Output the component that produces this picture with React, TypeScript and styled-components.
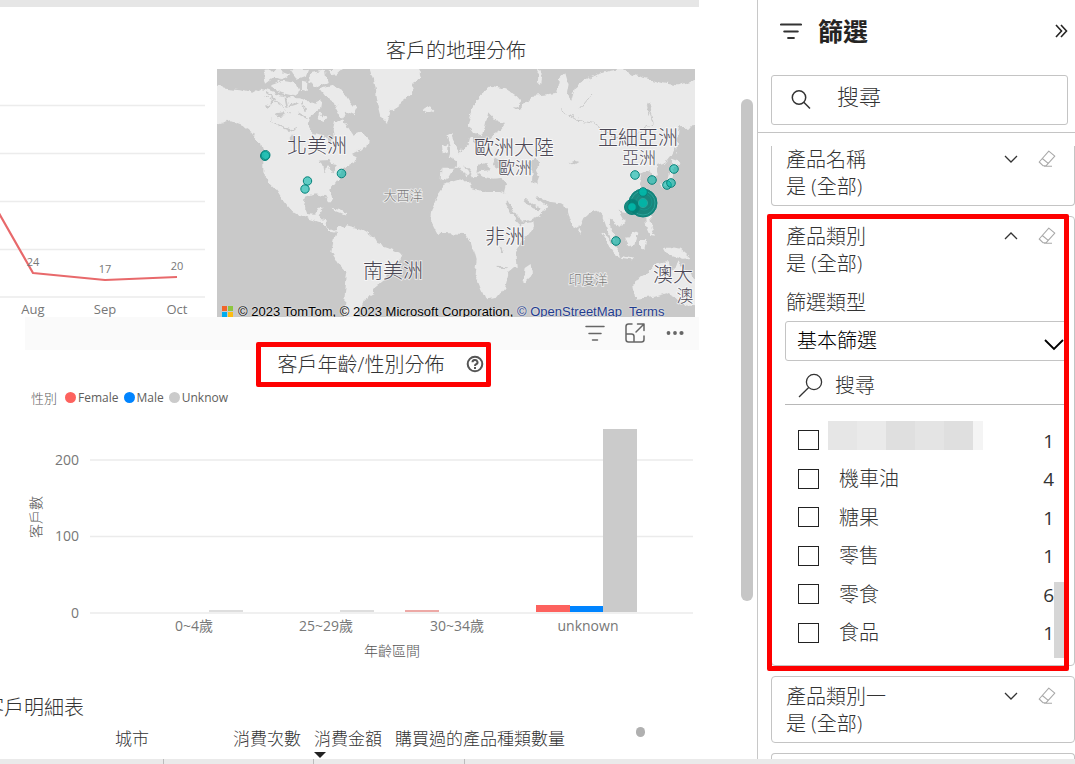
import React from "react";
import styled, { createGlobalStyle } from "styled-components";

const GlobalStyle = createGlobalStyle`
  * { box-sizing: border-box; }
  body {
    margin: 0;
    background: #fff;
    color: #333;
    font-family: "Open Sans", "Noto Sans CJK TC", sans-serif;
    font-weight: 300;
  }
  button, input, select { font: inherit; color: inherit; }
  h1, h2, h3, p, ul { margin: 0; padding: 0; font-weight: inherit; }
`;

const Page = styled.div`
  display: flex;
  flex-direction: column;
  min-height: 100vh;
  overflow: hidden;
`;

const Workspace = styled.div`
  display: flex;
  flex: 1;
`;

/* ---------- report ---------- */

const Report = styled.main`
  flex: 1;
  min-width: 0;
  display: flex;
`;

const Canvas = styled.div`
  flex: 1;
  min-width: 0;
  display: flex;
  flex-direction: column;
  overflow: hidden;
`;

const TopStrip = styled.div`
  height: 7px;
  margin-right: 1px;
  background: #e6e6e6;
`;

const ScrollTrack = styled.div`
  width: 57px;
  padding: 99px 4px 0 0;
  display: flex;
  justify-content: flex-end;
`;

const ScrollThumb = styled.div`
  width: 12px;
  height: 502px;
  border-radius: 6px;
  background: #c6c6c6;
`;

const VisualRow = styled.div`
  display: flex;
  height: 310px;
  padding-right: 5px;
`;

const Trend = styled.svg`
  width: 205px;
  height: 310px;
  flex: none;
  overflow: visible;
`;

const MapVisual = styled.section`
  flex: 1;
  min-width: 0;
  margin-left: 12px;
  display: flex;
  flex-direction: column;
`;

const VisualTitle = styled.h2`
  font-size: 20px;
  line-height: 30px;
  text-align: center;
`;

const MapTitle = styled(VisualTitle)`
  padding: 29px 0 3px;
`;

const MapFrame = styled.div`
  position: relative;
  flex: 1;
  min-height: 0;
  overflow: hidden;
  background: #c9c9c9;
`;

const MapSvg = styled.svg`
  display: block;
  width: 100%;
  height: 100%;
`;

const MapLabel = styled.text<{ $size: number; $soft?: boolean }>`
  font-size: ${(p) => p.$size}px;
  fill: ${(p) => (p.$soft ? "#777" : "#4b4754")};
  stroke: rgba(255, 255, 255, 0.6);
  stroke-width: 2px;
  paint-order: stroke;
  text-anchor: middle;
  dominant-baseline: central;
`;

const Attribution = styled.div`
  position: absolute;
  left: 5px;
  bottom: -2px;
  display: flex;
  align-items: center;
  gap: 5px;
  white-space: pre;
  font: 400 13px/15px "Liberation Sans", sans-serif;
  color: #000;
  text-shadow: 0 0 2px #fff;
  a { color: #1f3c8f; text-decoration: none; }
`;

const VisualToolbar = styled.div`
  display: flex;
  align-items: center;
  justify-content: flex-end;
  gap: 16px;
  height: 33px;
  margin: 0 1px 0 25px;
  padding: 0 12px 2px 0;
  background: #fafafa;
`;

const IconButton = styled.button`
  display: flex;
  align-items: center;
  justify-content: center;
  width: 24px;
  height: 24px;
  padding: 0;
  border: 0;
  background: none;
  color: #666;
`;

const Heading = styled.div`
  display: flex;
  justify-content: center;
  height: 30px;
  margin-left: 62px;
`;

const TitleCallout = styled.div`
  position: absolute;
  inset: -8px -7px -7px -22px;
  border: 5px solid #fe0000;
  border-radius: 2px;
  pointer-events: none;
`;

const CalloutAnchor = styled.div`
  position: relative;
  display: flex;
  align-items: center;
  gap: 22px;
  > svg { margin-bottom: 2px; }
`;

const Legend = styled.ul`
  display: flex;
  align-items: center;
  gap: 5px;
  height: 24px;
  margin: 5px 0 0 31px;
  list-style: none;
  font-size: 12px;
  color: #605e5c;
  font-weight: 400;
`;

const LegendTitle = styled.li`
  margin-right: 3px;
  font-size: 13px;
  font-weight: 300;
`;

const LegendItem = styled.li<{ $color: string }>`
  display: flex;
  align-items: center;
  gap: 2px;
  &::before {
    content: "";
    width: 11px;
    height: 11px;
    border-radius: 50%;
    background: ${(p) => p.$color};
  }
`;

const ColumnChart = styled.svg`
  display: block;
  width: 100%;
  height: 260px;
`;

const AxisText = styled.text<{ $size?: number; $anchor?: string }>`
  font-size: ${(p) => p.$size ?? 13}px;
  font-weight: 400;
  fill: #777;
  text-anchor: ${(p) => p.$anchor ?? "middle"};
  dominant-baseline: central;
`;

const AxisTitle = styled(AxisText)`
  font-weight: 300;
  fill: #555;
`;

const DetailTitle = styled.h2`
  margin: 24px 0 0 -16px;
  font-size: 20px;
  line-height: 30px;
  white-space: nowrap;
`;

const DetailHead = styled.div`
  display: flex;
  align-items: flex-start;
  height: 36px;
`;

const DetailTable = styled.table`
  margin-left: 56px;
  border-collapse: collapse;
  font-size: 17px;
  line-height: 24px;
  th { padding: 4px 0 0 13px; font-weight: 300; text-align: right; white-space: nowrap; }
  th:first-child { width: 93px; }
  th:nth-child(2) { width: 152px; }
`;

const Sorted = styled.div`
  position: relative;
  &::after {
    content: "";
    position: absolute;
    left: 0;
    top: 25px;
    border: 6px solid transparent;
    border-top-color: #222;
    border-bottom: 0;
  }
`;

const ResizeDot = styled.div`
  width: 9px;
  height: 10px;
  margin: 4px 0 0 71px;
  border-radius: 5px;
  background: #b0b0b0;
`;

const BottomStrip = styled.footer`
  display: flex;
  height: 5px;
  background: #eaeaea;
`;

const StripCell = styled.div<{ $width: number }>`
  width: ${(p) => p.$width}px;
  border-right: 1px solid #bcbcbc;
`;

/* ---------- filter panel ---------- */

const Panel = styled.aside`
  width: 318px;
  flex: none;
  display: flex;
  flex-direction: column;
  border-left: 1px solid #c8c8c8;
`;

const PanelHeader = styled.header`
  display: flex;
  align-items: center;
  height: 75px;
  padding: 0 2px 14px 22px;
  h1 { flex: 1; margin-left: 16px; font-size: 25px; line-height: 34px; font-weight: 700; color: #252423; }
  button { color: #252423; }
`;

const PanelSearch = styled.label`
  display: flex;
  align-items: center;
  gap: 26px;
  height: 50px;
  margin: 0 7px 7px 13px;
  padding: 0 19px;
  border: 1px solid #c4c4c4;
  border-radius: 3px;
  input {
    flex: 1;
    min-width: 0;
    padding: 0 0 8px;
    border: 0;
    outline: 0;
    background: none;
    font-size: 22px;
    line-height: 30px;
  }
  input::placeholder { color: #333; opacity: 1; }
`;

const CardList = styled.div`
  flex: 1;
  display: flex;
  flex-direction: column;
  gap: 10px;
  padding: 13px 0 0 13px;
  border-top: 1px solid #c4c4c4;
`;

const Card = styled.section<{ $part?: "top" | "bottom" }>`
  position: relative;
  padding: ${(p) => (p.$part === "bottom" ? "0 14px 5px" : "6px 14px 5px")};
  border: 1px solid #c4c4c4;
  border-radius: 4px;
  font-size: 20px;
  line-height: 27px;
  ${(p) => p.$part === "bottom" && "border-top: 0; border-top-left-radius: 0; border-top-right-radius: 0;"}
  ${(p) => p.$part === "top" && "border-bottom: 0; border-bottom-left-radius: 0; border-bottom-right-radius: 0; padding: 0; height: 6px;"}
`;

const CardHead = styled.div`
  display: flex;
  align-items: center;
  height: 27px;
  h3 { flex: 1; font-size: 20px; }
  button { margin: 0 1px 2px 0; }
  button + button { margin-left: 11px; color: #a9a9a9; }
`;

const CardBody = styled.div`
  position: relative;
  display: flex;
  flex-direction: column;
  height: 383px;
  margin: 0 -4px 0 -1px;
  padding-top: 12px;
  overflow: hidden;
  > label:first-child { margin-left: 1px; }
`;

const SelectBox = styled.div`
  position: relative;
  margin: 5px -12px 0 0;
  select {
    display: block;
    appearance: none;
    width: 100%;
    height: 40px;
    padding: 0 40px 2px 11px;
    border: 1px solid #c4c4c4;
    border-radius: 3px;
    background: #fff;
    color: #000;
  }
  svg { position: absolute; right: 12px; top: 18px; pointer-events: none; }
`;

const ValueSearch = styled.label`
  display: flex;
  align-items: center;
  gap: 12px;
  height: 44px;
  padding: 6px 0 0 13px;
  border-bottom: 1px solid #b8b8b8;
  svg { flex: none; }
  input { flex: 1; min-width: 0; padding: 0; border: 0; outline: 0; background: none; line-height: 27px; }
  input::placeholder { color: #333; opacity: 1; }
`;

const Values = styled.ul`
  display: grid;
  grid-auto-rows: 1fr;
  height: 231px;
  margin-top: 16px;
  padding: 0 10px 0 13px;
  list-style: none;
`;

const Value = styled.li`
  display: flex;
  align-items: center;
  justify-content: space-between;
  label { display: flex; align-items: center; gap: 20px; height: 100%; }
  input {
    appearance: none;
    width: 21px;
    height: 20px;
    margin: 0;
    border: 1px solid #222;
    background: #fff;
  }
`;

const Count = styled.span`
  padding-top: 2px;
  font-size: 19px;
  font-weight: 400;
`;

const Redacted = styled.span`
  align-self: flex-start;
  width: 155px;
  height: 29px;
  margin-left: -11px;
  background: linear-gradient(
    90deg,
    #e6e6e6 0 29px,
    #eaeaea 29px 58px,
    #dfdfdf 58px 87px,
    #e4e4e4 87px 116px,
    #dfdfdf 116px 145px,
    #f4f4f4 145px
  );
`;

const ValueThumb = styled.div`
  position: absolute;
  right: 0;
  bottom: 2px;
  width: 10px;
  height: 76px;
  background: #d6d6d6;
`;

const CardCallout = styled.div`
  position: absolute;
  inset: -3px 5px -6px -5px;
  border: 5px solid #fe0000;
  border-radius: 2px;
  pointer-events: none;
`;

/* ---------- icons ---------- */

const FilterIcon = ({ width = 20, stroke = 2 }: { width?: number; stroke?: number }) => (
  <svg width={width} height="18" viewBox="0 0 20 18" preserveAspectRatio="none" fill="none" stroke="currentColor" strokeWidth={stroke} strokeLinecap="round">
    <path d="M1 2.500h18M4 9.500h12M7.500 16h5" />
  </svg>
);

const FocusIcon = () => (
  <svg width="22" height="22" viewBox="0 0 22 22" fill="none" stroke="currentColor" strokeWidth="1.500" strokeLinejoin="round" strokeLinecap="round">
    <path d="M8 2H4.500A2.500 2.500 0 0 0 2 4.500v13A2.500 2.500 0 0 0 4.500 20h13a2.500 2.500 0 0 0 2.500-2.500V14M2 12h5.500A2.500 2.500 0 0 1 10 14.500V20M12 10l8-8M13.500 2H20v6.500" />
  </svg>
);

const MoreIcon = () => (
  <svg width="20" height="6" viewBox="0 0 20 6" fill="currentColor">
    <circle cx="3.500" cy="3" r="1.900" />
    <circle cx="10" cy="3" r="1.900" />
    <circle cx="16.500" cy="3" r="2.100" />
  </svg>
);

const HelpIcon = () => (
  <svg width="18" height="18" viewBox="0 0 18 18" fill="none" stroke="#555" strokeWidth="2">
    <circle cx="9" cy="9" r="7.300" />
    <path d="M6.500 7.300a2.500 2.200 0 1 1 3.700 1.900c-.9.500-1.200.8-1.200 1.700" />
    <path d="M9 12v1.900" />
  </svg>
);

const SearchIcon = () => (
  <svg width="20" height="20" viewBox="0 0 20 20" fill="none" stroke="#333" strokeWidth="1.500">
    <circle cx="8" cy="7.500" r="6.700" />
    <path d="M12.800 12.300 19 18.500" />
  </svg>
);

const ValueSearchIcon = () => (
  <svg width="25" height="25" viewBox="0 0 25 25" fill="none" stroke="#333" strokeWidth="1.300">
    <circle cx="16" cy="9" r="7.600" />
    <path d="M10.700 14.500 1 24" />
  </svg>
);

const CollapseIcon = () => (
  <svg width="14" height="14" viewBox="0 0 14 14" fill="none" stroke="currentColor" strokeWidth="1.600">
    <path d="m2 1 5.500 6L2 13M7 1l5.500 6L7 13" />
  </svg>
);

const Chevron = ({ up }: { up?: boolean }) => (
  <svg width="14" height="8" viewBox="0 0 14 8" fill="none" stroke="#333" strokeWidth="1.300">
    <path d={up ? "M1 7l6-6 6 6" : "M1 1l6 6 6-6"} />
  </svg>
);

const SelectChevron = () => (
  <svg width="20" height="12" viewBox="0 0 20 12" fill="none" stroke="#000" strokeWidth="1.800">
    <path d="m1 1 9 9 9-9" />
  </svg>
);

const EraserIcon = () => (
  <svg width="18" height="18" viewBox="0 0 18 18" fill="none" stroke="currentColor" strokeWidth="1.100" strokeLinejoin="round">
    <path d="M10.800 1.200 16.800 6.200 8 15.800H5.200L1.200 12ZM4.300 8.500l6.200 5.100M6 16.300h8" />
  </svg>
);

const BrandTiles = () => (
  <svg width="11" height="11" viewBox="0 0 11 11">
    <path fill="#f1652a" d="M0 0h5v5H0z" />
    <path fill="#8dc63f" d="M6 0h5v5H6z" />
    <path fill="#00adef" d="M0 6h5v5H0z" />
    <path fill="#fdbc11" d="M6 6h5v5H6z" />
  </svg>
);

/* ---------- data ---------- */

const trend = [
  { label: "Aug", value: 24, x: 33, y: 266, labelY: 254 },
  { label: "Sep", value: 17, x: 105, y: 273, labelY: 261 },
  { label: "Oct", value: 20, x: 177, y: 270, labelY: 258 },
];

const mapLabels = [
  { text: "北美洲", x: 100, y: 76, size: 20 },
  { text: "大西洋", x: 186, y: 126, size: 13, soft: true },
  { text: "南美洲", x: 176, y: 201, size: 20 },
  { text: "歐洲大陸", x: 297, y: 78, size: 20 },
  { text: "歐洲", x: 298, y: 98, size: 17 },
  { text: "亞細亞洲", x: 421, y: 68, size: 20 },
  { text: "亞洲", x: 422, y: 88, size: 17 },
  { text: "非洲", x: 288, y: 167, size: 20 },
  { text: "印度洋", x: 371, y: 210, size: 13, soft: true },
  { text: "澳大", x: 456, y: 205, size: 20 },
  { text: "澳", x: 468, y: 226, size: 17 },
];

const pins = [
  [48, 87, 4.500], [48.500, 86, 4.500], [90.500, 112, 4.200], [88, 120, 4.200], [124.500, 104.500, 4.300],
  [418, 106, 4.300], [435, 111, 4.300], [457, 100, 4.300], [450, 116, 4.300], [454, 114, 4.300], [399, 172, 4.300],
];

const ageGroups = [
  { label: "0~4歲", x: 194 },
  { label: "25~29歲", x: 326 },
  { label: "30~34歲", x: 457 },
  { label: "unknown", x: 588 },
];

const bars = [
  { x: 209, y: 201, h: 2, color: "#dedede" },
  { x: 340, y: 201, h: 2, color: "#dedede" },
  { x: 405, y: 201, h: 2, color: "#eda9a6" },
  { x: 536, y: 196, h: 7, color: "#fd625e" },
  { x: 570, y: 197, h: 6, color: "#0084ff" },
  { x: 603, y: 20, h: 183, color: "#cbcbcb" },
];

const values = [
  { name: "", count: 1 },
  { name: "機車油", count: 4 },
  { name: "糖果", count: 1 },
  { name: "零售", count: 1 },
  { name: "零食", count: 6 },
  { name: "食品", count: 1 },
];

const WorldMap = () => (
  <MapSvg viewBox="0 0 478 248" preserveAspectRatio="xMidYMid slice" role="img" aria-label="客戶的地理分佈">
    <defs>
      <filter id="coast" x="0" y="0" width="100%" height="100%">
        <feTurbulence type="fractalNoise" baseFrequency="0.12" numOctaves="3" seed="4" result="n" />
        <feDisplacementMap in="SourceGraphic" in2="n" scale="7" xChannelSelector="R" yChannelSelector="G" />
      </filter>
    </defs>
    <g filter="url(#coast)">
      <rect x="-20" y="-20" width="520" height="290" fill="#c9c9c9" />
      <g transform="translate(-7 -9) scale(.33333)" fill="#eaeaea">
        <path d="M-10 76 50 84 90 88 130 98 150 86 175 92 200 102 235 112 270 112 290 122 315 128 335 118 330 148 302 165 296 195 312 218 345 228 362 250 372 235 368 212 375 180 400 182 415 200 430 222 448 215 476 238 472 262 450 272 425 285 440 292 432 308 402 325 388 350 372 372 358 392 366 424 354 424 344 405 316 400 288 410 282 440 290 462 316 464 326 446 338 446 326 474 346 477 350 500 372 508 384 516 362 512 338 490 310 480 278 470 244 450 222 422 198 388 176 366 160 340 160 290 150 252 128 222 98 198 60 184 21 194-10 200Z" />
        <path d="M202 390 215 402 236 432 230 430 212 408Z" />
        <path d="M160 32 205 30 238 42 214 60 190 52 168 68ZM180 76 218 62 260 70 272 92 250 108 210 98ZM240 28 292 27 284 48 262 56ZM300 40 345 30 350 66 322 82 298 68ZM330 88 372 76 400 92 420 124 440 146 432 166 402 152 398 178 376 160 386 138 352 116ZM352 27 402 27 378 48ZM276 62 292 66 290 96 276 92ZM330 160 352 172 344 186 326 178Z" />
        <path d="M480 20 492 60 498 92 504 130 514 168 528 186 542 152 572 130 602 108 618 80 608 66 636 50 628 20Z" />
        <path d="M640 148 652 138 670 144 668 156 650 163Z" />
        <path d="M362 440 392 448 412 458 400 460 366 446Z" />
        <path d="M386 502 410 496 450 506 490 530 502 552 532 562 574 582 568 602 546 622 532 650 508 670 490 700 470 710 460 735 445 750 430 790 400 790 408 700 414 640 386 612 364 576 370 546 376 520Z" />
        <path d="M712 226 728 216 732 242 746 268 742 288 716 292 724 266ZM696 258 712 252 712 274 698 280Z" />
        <g transform="translate(720)">
          <path d="M-26 326 16 326 20 304 0 290 16 286 40 268 54 250 58 232 66 232 70 250 108 246 128 228 150 214 168 192 140 188 122 164 114 164 106 200 92 226 76 218 64 202 50 192 60 160 90 105 125 78 165 85 200 108 215 125 202 140 188 138 208 152 226 130 246 108 280 104 322 98 330 55 346 40 356 75 350 108 364 122 374 86 402 62 440 45 480 32 520 26 545 44 600 58 640 70 680 76 760 56 760 196 690 202 682 250 664 284 640 312 618 318 624 344 608 350 598 326 574 340 566 372 584 402 576 432 556 450 528 456 506 452 524 484 508 504 486 478 476 476 484 506 502 548 482 534 468 500 456 466 440 452 418 458 400 474 388 502 376 510 360 478 350 442 330 430 300 426 268 408 256 410 290 438 272 464 236 482 208 486 188 448 162 400 168 376 156 354 130 356 98 350 84 340 96 330 120 328 102 312 84 318 82 350 70 352 60 334 42 312 58 346 48 352 30 318 8 330 -6 354-28 364Z" />
          <path d="M-16 374 22 362 60 360 66 384 108 396 150 396 170 404 182 432 200 468 216 492 250 486 252 500 216 546 196 580 200 620 176 640 166 680 140 714 106 718 94 690 74 640 80 600 66 550 44 522-5 520-40 518-60 480-54 440-34 400Z" />
          <path d="M224 624 242 612 246 640 230 670 218 660Z" />
          <path d="M452 518 470 530 506 572 510 588 492 578 468 546ZM526 540 546 516 562 524 556 556 536 562ZM570 540 586 540 580 568 570 566ZM512 586 552 592 550 598 514 594ZM588 464 600 468 604 500 618 530 604 528 592 500ZM636 560 662 560 690 566 722 594 700 596 668 586 640 574Z" />
          <path d="M550 674 562 654 596 636 616 610 652 604 656 620 672 630 684 600 694 622 716 640 760 670 760 740 700 736 680 714 650 700 606 712 556 716Z" />
          <path d="M664 296 690 306 672 318 670 342 660 372 640 380 632 372 652 360 660 330ZM678 204 684 252 680 284 674 250Z" />
          <path d="M384 506 392 514 388 524 382 518Z" />
          <path d="M264 27 276 34 270 76 260 66Z" />
        </g>
        <g transform="translate(720)" fill="#c9c9c9">
          <path d="M128 314 138 292 154 300 168 298 188 318 166 326 142 324ZM236 306 252 298 266 310 258 328 268 354 262 370 246 364 248 336Z" />
          <path d="M358 306 372 300 388 306 374 314ZM600 130 608 140 596 168 590 150Z" />
        </g>
        <path fill="#c9c9c9" d="M326 302 352 300 362 314 384 318 370 334 354 322 340 334 336 312ZM168 132 190 138 180 148ZM196 160 220 156 226 168 204 172ZM244 224 252 224 256 254 248 254Z" />
      </g>
      <g transform="translate(-7 -9) scale(.33333)" fill="none" stroke="#c9c9c9" strokeWidth="6">
        <path d="M160 108 210 130 240 160M180 180 216 196M1050 150 1100 180 1150 190 1220 240M1310 130 1330 190 1270 230M1150 100 1110 150" strokeWidth="3" />
        <path d="M888 424 912 466 938 492M944 420 968 440 990 446" strokeWidth="10" />
        <path d="M872 560 880 580M866 620 890 622" />
        <path d="M170 98 196 116 186 132M226 108 232 138 262 128M262 160 292 176M206 196 240 210 262 200M278 130 286 152" strokeWidth="5" />
      </g>
    </g>
    {mapLabels.map((l) => (
      <MapLabel key={l.text} x={l.x} y={l.y} $size={l.size} $soft={l.soft}>{l.text}</MapLabel>
    ))}
    <g fill="#01b8aa" fillOpacity="0.600" stroke="#07827a" strokeWidth="1">
      {pins.map(([x, y, r], i) => <circle key={i} cx={x} cy={y} r={r} />)}
      <circle cx="426" cy="134" r="14" fill="#047d73" fillOpacity="0.900" />
      <circle cx="426" cy="134" r="12" fill="none" stroke="#29a399" />
      <circle cx="427" cy="133" r="8" fill="none" stroke="#14958b" />
      <circle cx="415" cy="138" r="7.500" fill="#047d73" fillOpacity="0.900" />
      <circle cx="415" cy="138" r="4.300" fillOpacity="0.900" />
      <circle cx="426" cy="123" r="4.300" fillOpacity="0.900" />
      <circle cx="426" cy="134" r="4.600" fillOpacity="0.900" stroke="#29a399" />
    </g>
  </MapSvg>
);

const FilterSummary = ({ name, open }: { name: string; open?: boolean }) => (
  <>
    <CardHead>
      <h3>{name}</h3>
      <IconButton aria-label={open ? "收合" : "展開"}><Chevron up={open} /></IconButton>
      <IconButton aria-label="清除"><EraserIcon /></IconButton>
    </CardHead>
    <p>是 (全部)</p>
  </>
);

export default function App() {
  return (
    <Page>
      <GlobalStyle />
      <Workspace>
        <Report>
          <Canvas>
            <TopStrip />
            <VisualRow>
              <Trend viewBox="0 0 205 310" role="img" aria-label="趨勢">
                <path d="M0 98.500h205M0 146.500h205M0 194.500h205M0 242.500h205M0 290h205" stroke="#ececec" strokeWidth="1.500" />
                <path d="M-20 174 0 208 33 266 105 273 177 270" fill="none" stroke="#e8696b" strokeWidth="2.200" strokeLinejoin="round" />
                {trend.map((t) => (
                  <g key={t.label}>
                    <AxisText x={t.x} y={t.labelY} $size={11}>{t.value}</AxisText>
                    <AxisText x={t.x} y={302}>{t.label}</AxisText>
                  </g>
                ))}
              </Trend>
              <MapVisual>
                <MapTitle>客戶的地理分佈</MapTitle>
                <MapFrame>
                  <WorldMap />
                  <Attribution>
                    <BrandTiles />
                    <span>
                      © 2023 TomTom, © 2023 Microsoft Corporation, <a href="#osm">© OpenStreetMap</a>  <a href="#terms">Terms</a>
                    </span>
                  </Attribution>
                </MapFrame>
              </MapVisual>
            </VisualRow>

            <VisualToolbar>
              <IconButton aria-label="篩選"><FilterIcon stroke={1.500} /></IconButton>
              <IconButton aria-label="焦點模式"><FocusIcon /></IconButton>
              <IconButton aria-label="更多選項"><MoreIcon /></IconButton>
            </VisualToolbar>

            <Heading>
              <CalloutAnchor>
                <VisualTitle>客戶年齡/性別分佈</VisualTitle>
                <HelpIcon />
                <TitleCallout />
              </CalloutAnchor>
            </Heading>

            <Legend>
              <LegendTitle>性別</LegendTitle>
              <LegendItem $color="#fd625e">Female</LegendItem>
              <LegendItem $color="#0084ff">Male</LegendItem>
              <LegendItem $color="#cbcbcb">Unknow</LegendItem>
            </Legend>

            <ColumnChart viewBox="0 0 700 260" role="img" aria-label="客戶年齡/性別分佈">
              <path d="M90 51h603M90 127.500h603M90 204h603" stroke="#ebebeb" strokeWidth="1.500" />
              <AxisText x={79} y={50} $size={14} $anchor="end">200</AxisText>
              <AxisText x={79} y={126} $size={14} $anchor="end">100</AxisText>
              <AxisText x={79} y={203} $size={14} $anchor="end">0</AxisText>
              {bars.map((b) => <rect key={b.x} x={b.x} y={b.y} width="34" height={b.h} fill={b.color} />)}
              {ageGroups.map((g) => <AxisText key={g.label} x={g.x} y={216} $size={14}>{g.label}</AxisText>)}
              <AxisTitle x={392} y={241} $size={14}>年齡區間</AxisTitle>
              <AxisTitle $size={14} transform="translate(35 108) rotate(-90)">客戶數</AxisTitle>
            </ColumnChart>

            <DetailTitle>客戶明細表</DetailTitle>
            <DetailHead>
              <DetailTable>
                <thead>
                  <tr>
                    <th scope="col">城市</th>
                    <th scope="col">消費次數</th>
                    <th scope="col"><Sorted>消費金額</Sorted></th>
                    <th scope="col">購買過的產品種類數量</th>
                  </tr>
                </thead>
              </DetailTable>
              <ResizeDot />
            </DetailHead>
          </Canvas>
          <ScrollTrack><ScrollThumb /></ScrollTrack>
        </Report>

        <Panel>
          <PanelHeader>
            <FilterIcon width={22} stroke={2.200} />
            <h1>篩選</h1>
            <IconButton aria-label="收合窗格"><CollapseIcon /></IconButton>
          </PanelHeader>
          <PanelSearch>
            <SearchIcon />
            <input type="text" placeholder="搜尋" aria-label="搜尋" />
          </PanelSearch>
          <CardList>
            <Card $part="bottom"><FilterSummary name="產品名稱" /></Card>
            <Card>
              <FilterSummary name="產品類別" open />
              <CardBody>
                <label htmlFor="filter-type">篩選類型</label>
                <SelectBox>
                  <select id="filter-type" defaultValue="basic">
                    <option value="basic">基本篩選</option>
                  </select>
                  <SelectChevron />
                </SelectBox>
                <ValueSearch>
                  <ValueSearchIcon />
                  <input type="text" placeholder="搜尋" aria-label="搜尋" />
                </ValueSearch>
                <Values>
                  {values.map((v) => (
                    <Value key={v.name}>
                      <label>
                        <input type="checkbox" aria-label={v.name || "已遮蔽"} />
                        {v.name || <Redacted />}
                      </label>
                      <Count>{v.count}</Count>
                    </Value>
                  ))}
                </Values>
                <ValueThumb />
              </CardBody>
              <CardCallout />
            </Card>
            <Card><FilterSummary name="產品類別一" /></Card>
            <Card $part="top" />
          </CardList>
        </Panel>
      </Workspace>
      <BottomStrip>
        <StripCell $width={164} />
        <StripCell $width={150} />
        <StripCell $width={151} />
      </BottomStrip>
    </Page>
  );
}
